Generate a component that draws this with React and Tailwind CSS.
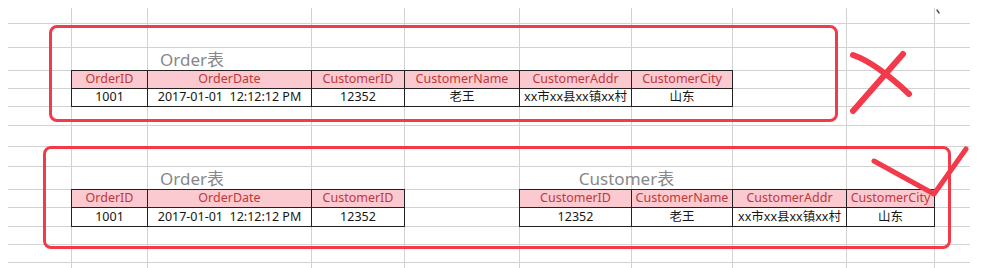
import React from 'react';

const FONT = { fontFamily: '"Noto Sans", "Noto Sans CJK SC", sans-serif' };

const GRID =
    'grid grid-cols-[64px_76px_164px_93px_115px_112px_101px_114px_88px_35px] grid-rows-[16px_24px_23px_18px_18px_19px_21px_20px_23px_18px_19px_18px_18px_5px]';

// 10 columns x 14 rows of empty sheet cells
const sheetCells = Array.from({ length: 140 }, (_, i) => {
    const lastCol = i % 10 === 9;
    const lastRow = i >= 130;
    let cls = 'border-[#d2d2d2]';
    if (!lastCol) cls += ' border-r';
    if (!lastRow) cls += ' border-b';
    return cls;
});

const orderTable1 = [
    { col: 'col-start-2', head: 'OrderID', value: '1001' },
    { col: 'col-start-3', head: 'OrderDate', value: '2017-01-01  12:12:12 PM' },
    { col: 'col-start-4', head: 'CustomerID', value: '12352' },
    { col: 'col-start-5', head: 'CustomerName', value: '老王' },
    { col: 'col-start-6', head: 'CustomerAddr', value: 'xx市xx县xx镇xx村' },
    { col: 'col-start-7', head: 'CustomerCity', value: '山东' },
];

const orderTable2 = orderTable1.slice(0, 3);

const customerTable = [
    { col: 'col-start-6', head: 'CustomerID', value: '12352' },
    { col: 'col-start-7', head: 'CustomerName', value: '老王' },
    { col: 'col-start-8', head: 'CustomerAddr', value: 'xx市xx县xx镇xx村' },
    { col: 'col-start-9', head: 'CustomerCity', value: '山东' },
];

const cellBase =
    '-ml-px -mt-px border border-[#222] flex items-center justify-center whitespace-pre text-[12.5px] leading-none';

function TableRows({ cols, headRow, dataRow }) {
    return cols.map((c) => (
        <React.Fragment key={c.col + c.head}>
            <div className={`${c.col} ${headRow} ${cellBase} bg-[#fbc9d0] text-[#c0383a]`}>{c.head}</div>
            <div className={`${c.col} ${dataRow} ${cellBase} bg-white text-[#161616]`}>{c.value}</div>
        </React.Fragment>
    ));
}

function Title({ className, children }) {
    return (
        <div className={`${className} flex items-center justify-center text-[17px] leading-none text-[#888]`}>
            {children}
        </div>
    );
}

export default function App() {
    return (
        <div className="relative w-[982px] h-[268px] bg-white overflow-hidden pl-2 pt-2" style={FONT}>
            <div className="grid">
                {/* sheet gridlines */}
                <div className={`${GRID} [grid-area:1/1]`}>
                    {sheetCells.map((cls, i) => (
                        <div key={i} className={cls} />
                    ))}
                </div>

                {/* sheet content */}
                <div className={`${GRID} [grid-area:1/1]`}>
                    <Title className="col-start-2 col-span-2 row-start-3">Order表</Title>
                    <TableRows cols={orderTable1} headRow="row-start-4" dataRow="row-start-5" />

                    <Title className="col-start-2 col-span-2 row-start-9">Order表</Title>
                    <TableRows cols={orderTable2} headRow="row-start-10" dataRow="row-start-11" />

                    <Title className="col-start-6 col-span-2 row-start-9">Customer表</Title>
                    <TableRows cols={customerTable} headRow="row-start-10" dataRow="row-start-11" />
                </div>
            </div>

            {/* hand drawn annotations */}
            <div className="absolute left-[49px] top-[25px] w-[789px] h-[97px] border-[3px] border-[#f23b4a] rounded-[8px]" />
            <div className="absolute left-[43px] top-[146px] w-[908px] h-[103px] border-[3px] border-[#f23b4a] rounded-[8px]" />

            <svg className="absolute inset-0 pointer-events-none" width="982" height="268" viewBox="0 0 982 268">
                <g fill="none" stroke="#f33a4b" strokeLinecap="round" strokeLinejoin="round">
                    <path d="M853 55 Q876 63 909 94" strokeWidth="6" />
                    <path d="M903 54 L853 111" strokeWidth="6" />
                    <path d="M874 161 L934 194 L966 149" strokeWidth="5" />
                </g>
                <path d="M937 10 L939 13" stroke="#555" strokeWidth="1.5" strokeLinecap="round" />
            </svg>
        </div>
    );
}
